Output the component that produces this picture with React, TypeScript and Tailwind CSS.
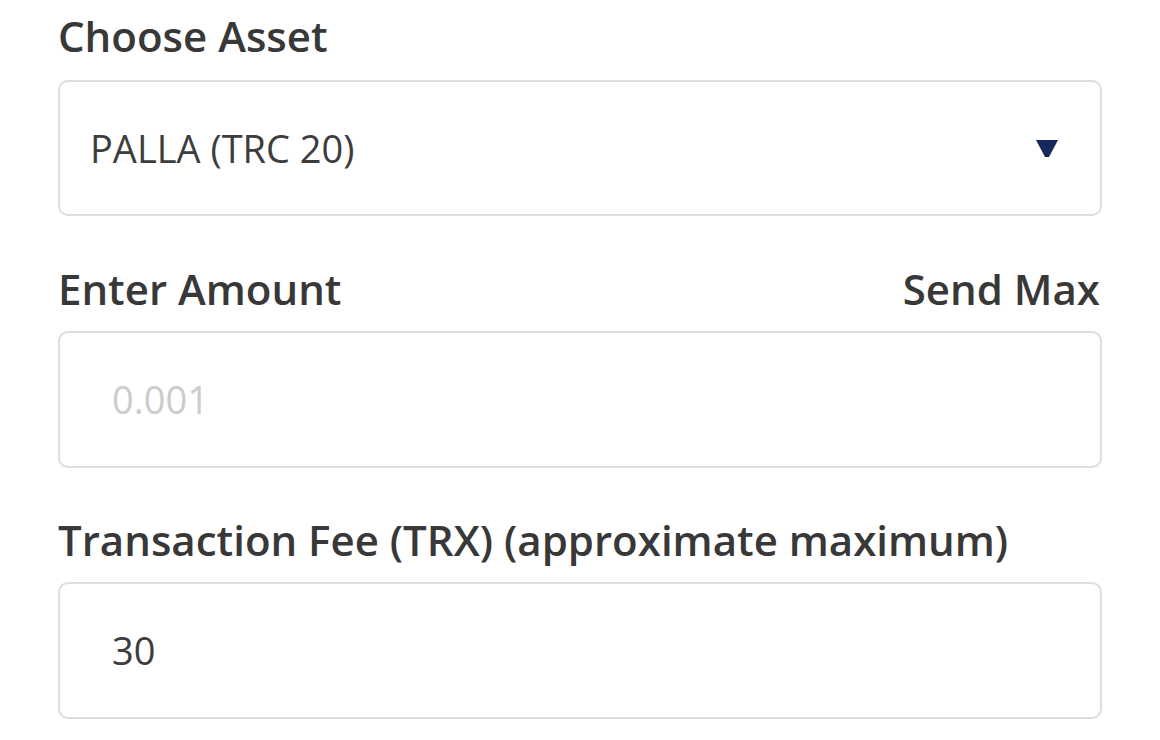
import React from "react";

const font = { fontFamily: '"Open Sans", "Noto Sans", sans-serif' };

export default function App() {
  return (
    <div className="w-[1160px] h-[740px] bg-white overflow-hidden" style={font}>
      <div className="ml-[58px] w-[1044px] pt-[11px] flex flex-col">
        <div className="h-[50px] leading-[50px] text-[42px] font-semibold text-[#383838]">
          Choose Asset
        </div>
        <div className="mt-[19px] h-[136px] rounded-[10px] border-2 border-[#dedede] flex items-center justify-between pl-[30px] pr-[42px]">
          <span className="text-[38px] text-[#3d3d3d]">PALLA (TRC 20)</span>
          <svg width="22" height="17" viewBox="0 0 22 17">
            <polygon points="0,0 22,0 13,17 9,17" fill="#17295a" />
          </svg>
        </div>

        <div className="mt-[48px] h-[50px] leading-[50px] flex justify-between text-[42px] font-semibold text-[#383838]">
          <span>Enter Amount</span>
          <span className="mr-[2px]">Send Max</span>
        </div>
        <div className="mt-[17px] h-[137px] rounded-[10px] border-2 border-[#dedede] flex items-center pl-[52px]">
          <span className="text-[38px] text-[#cccccc]">0.001</span>
        </div>

        <div className="mt-[47px] h-[50px] leading-[50px] text-[42px] font-semibold text-[#383838]">
          Transaction Fee (TRX) (approximate maximum)
        </div>
        <div className="mt-[17px] h-[137px] rounded-[10px] border-2 border-[#dedede] flex items-center pl-[52px]">
          <span className="text-[38px] text-[#3d3d3d]">30</span>
        </div>
      </div>
    </div>
  );
}
